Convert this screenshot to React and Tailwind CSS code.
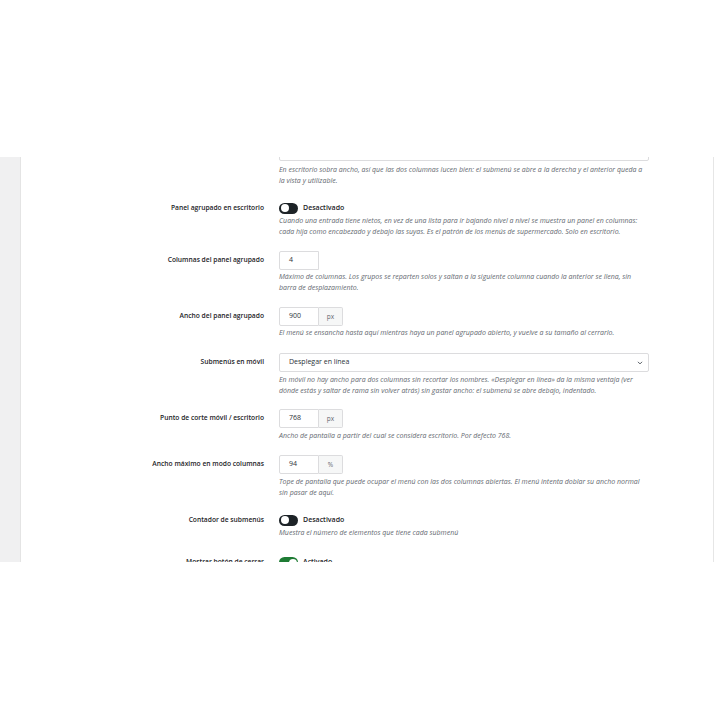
import React from "react";

const Toggle = ({ on }) => (
  <div className="flex h-[16px] items-center gap-[5px]">
    <span
      className={
        "relative inline-block h-[11px] w-[19px] rounded-full " +
        (on ? "bg-[#1e7b34]" : "bg-[#1d2327]")
      }
    >
      <span
        className={
          "absolute top-[1.5px] h-[8px] w-[8px] rounded-full bg-white " +
          (on ? "right-[1.5px]" : "left-[1.5px]")
        }
      />
    </span>
    <span className="text-[7px] font-semibold text-[#1d2327]">
      {on ? "Activado" : "Desactivado"}
    </span>
  </div>
);

const NumberInput = ({ value, unit }) => (
  <div className="flex h-[19px]">
    <div className="flex w-[40px] items-center rounded-l-[2px] border border-[#dcdcde] bg-white pl-[9px] text-[7px] text-[#2c3338]">
      {value}
    </div>
    {unit && (
      <div className="flex w-[24px] items-center justify-center rounded-r-[2px] border border-l-0 border-[#dcdcde] bg-[#f6f7f7] text-[6.5px] text-[#646970]">
        {unit}
      </div>
    )}
  </div>
);

const Select = ({ value }) => (
  <div className="flex h-[19px] w-[370px] items-center justify-between rounded-[2px] border border-[#dcdcde] bg-white pl-[9px] pr-[5px] text-[7px] font-medium text-[#2c3338]">
    <span>{value}</span>
    <svg width="6" height="6" viewBox="0 0 10 10" fill="none">
      <path d="M2 3.5l3 3 3-3" stroke="#50575e" strokeWidth="1.6" strokeLinecap="round" strokeLinejoin="round" />
    </svg>
  </div>
);

const Desc = ({ children, className = "" }) => (
  <p className={"w-[370px] text-[7px] italic leading-[10.5px] text-[#646970] " + className}>
    {children}
  </p>
);

const Row = ({ label, labelH, children, className = "" }) => (
  <div className={"flex items-start " + className}>
    <div
      className="flex w-[243px] shrink-0 items-center justify-end text-right text-[6.7px] font-semibold text-[#1d2327]"
      style={{ height: labelH }}
    >
      {label}
    </div>
    <div className="ml-[15px] flex flex-col">{children}</div>
  </div>
);

export default function App() {
  return (
    <div
      className="min-h-[720px] bg-white pt-[157px]"
      style={{ fontFamily: '"Open Sans", "Liberation Sans", sans-serif' }}
    >
      <div className="flex h-[405px] overflow-hidden">
        <div className="w-[21px] shrink-0 border-r border-[#e4e4e4] bg-[#f0f0f1]" />
        <div className="w-[693px] shrink-0 overflow-hidden border-r border-[#e6e6e6] bg-white">
          <div className="-mt-[26px]">
            <Row label="" labelH={30}>
              <div className="h-[30px] w-[370px] rounded-[2px] border border-[#dcdcde] bg-white" />
              <Desc className="mt-[4px]">
                En escritorio sobra ancho, así que las dos columnas lucen bien: el submenú se abre a la derecha y el anterior queda a la vista y utilizable.
              </Desc>
            </Row>

            <Row label="Panel agrupado en escritorio" labelH={16} className="mt-[14px]">
              <Toggle on={false} />
              <Desc>
                Cuando una entrada tiene nietos, en vez de una lista para ir bajando nivel a nivel se muestra un panel en columnas: cada hija como encabezado y debajo las suyas. Es el patrón de los menús de supermercado. Solo en escritorio.
              </Desc>
            </Row>

            <Row label="Columnas del panel agrupado" labelH={18} className="mt-[14px]">
              <NumberInput value="4" />
              <Desc className="mt-[2px]">
                Máximo de columnas. Los grupos se reparten solos y saltan a la siguiente columna cuando la anterior se llena, sin barra de desplazamiento.
              </Desc>
            </Row>

            <Row label="Ancho del panel agrupado" labelH={18} className="mt-[14px]">
              <NumberInput value="900" unit="px" />
              <Desc className="mt-[2px]">
                El menú se ensancha hasta aquí mientras haya un panel agrupado abierto, y vuelve a su tamaño al cerrarlo.
              </Desc>
            </Row>

            <Row label="Submenús en móvil" labelH={18} className="mt-[14.5px]">
              <Select value="Desplegar en línea" />
              <Desc className="mt-[3px]">
                En móvil no hay ancho para dos columnas sin recortar los nombres. «Desplegar en línea» da la misma ventaja (ver dónde estás y saltar de rama sin volver atrás) sin gastar ancho: el submenú se abre debajo, indentado.
              </Desc>
            </Row>

            <Row label="Punto de corte móvil / escritorio" labelH={18} className="mt-[13px]">
              <NumberInput value="768" unit="px" />
              <Desc className="mt-[3px]">
                Ancho de pantalla a partir del cual se considera escritorio. Por defecto 768.
              </Desc>
            </Row>

            <Row label="Ancho máximo en modo columnas" labelH={18} className="mt-[13.5px]">
              <NumberInput value="94" unit="%" />
              <Desc className="mt-[3px]">
                Tope de pantalla que puede ocupar el menú con las dos columnas abiertas. El menú intenta doblar su ancho normal sin pasar de aquí.
              </Desc>
            </Row>

            <Row label="Contador de submenús" labelH={16} className="mt-[14px]">
              <Toggle on={false} />
              <Desc>Muestra el número de elementos que tiene cada submenú</Desc>
            </Row>

            <Row label="Mostrar botón de cerrar" labelH={16} className="mt-[16px]">
              <Toggle on={true} />
              <Desc>Muestra un botón para cerrar el menú.</Desc>
            </Row>
          </div>
        </div>
      </div>
    </div>
  );
}
